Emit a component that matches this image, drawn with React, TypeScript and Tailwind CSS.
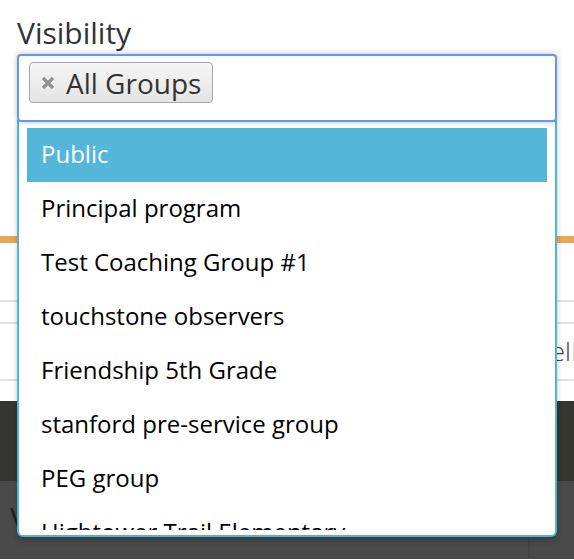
const groups = [
  'Public',
  'Principal program',
  'Test Coaching Group #1',
  'touchstone observers',
  'Friendship 5th Grade',
  'stanford pre-service group',
  'PEG group',
  'Hightower Trail Elementary',
  'Westside Mentors',
];

const App = () => {
  return (
    <div className="relative w-[574px] h-[560px] overflow-hidden bg-white font-['Open_Sans',sans-serif]">
      {/* page behind the dropdown */}
      <div className="flex flex-col">
        <div className="h-[54px] pl-[17px] pt-[18px] text-[30px] leading-[30px] text-[#333]">Visibility</div>

        {/* select box */}
        <div className="relative z-10 mx-[17px] h-[68px] rounded-[4px] border-2 border-[#6199f1] bg-white pl-[10px] pt-[6px] shadow-[0_0_6px_rgba(0,0,0,0.25)]">
          <div className="inline-flex h-[41px] items-center gap-[11px] rounded-[4px] border border-[#a6a6a6] bg-gradient-to-b from-[#f6f6f6] to-[#e4e4e4] pl-[11px] pr-[11px]">
            <svg width="14" height="14" viewBox="0 0 14 14" className="mt-[1px]">
              <path d="M2 2 L12 12 M12 2 L2 12" stroke="#929292" strokeWidth="3.4" strokeLinecap="butt" />
            </svg>
            <span className="text-[28px] leading-none text-[#333]">All Groups</span>
          </div>
        </div>

        <div className="h-[114px]" />
        <div className="h-[7px] bg-[#eba654]" />
        <div className="h-[57px]" />
        <div className="h-[22px] border-t-2 border-[#e2e2e2]" />
        <div className="flex h-[59px] items-center justify-end border-y-2 border-[#e2e2e2] text-[26px] font-light text-[#444]">
          <span>Sel</span>
          <span className="mr-[-2px] w-[5px] overflow-hidden text-[#ccc]">l</span>
        </div>
        <div className="h-[20px]" />
        <div className="h-[80px] bg-[#38352f]" />
        <div className="flex h-[78px] items-start bg-[#4a4a4a]">
          <div className="pl-[10px] pt-[22px] text-[30px] leading-[30px] text-[#1e1e1e]">Visible to everybody</div>
          <div className="ml-auto mt-[56px] h-[22px] w-[46px] border-l-2 border-[#434343]" />
        </div>
      </div>

      {/* dropdown */}
      <div className="absolute left-[17px] top-[120px] flex h-[417px] w-[540px] flex-col rounded-b-[6px] border-2 border-t-0 border-[#4db4dc] bg-white px-[8px] pb-[5px] pt-[8px] shadow-[0_4px_6px_rgba(0,0,0,0.2)]">
        <ul className="flex-1 overflow-hidden">
          {groups.map((g, i) => (
            <li
              key={g}
              className={
                i === 0
                  ? 'h-[54px] bg-[#54b6d9] pl-[14px] text-[24px] leading-[52px] text-white'
                  : 'h-[54px] pl-[14px] text-[24px] leading-[52px] text-black'
              }
            >
              {g}
            </li>
          ))}
        </ul>
      </div>
    </div>
  );
};

export default App;
